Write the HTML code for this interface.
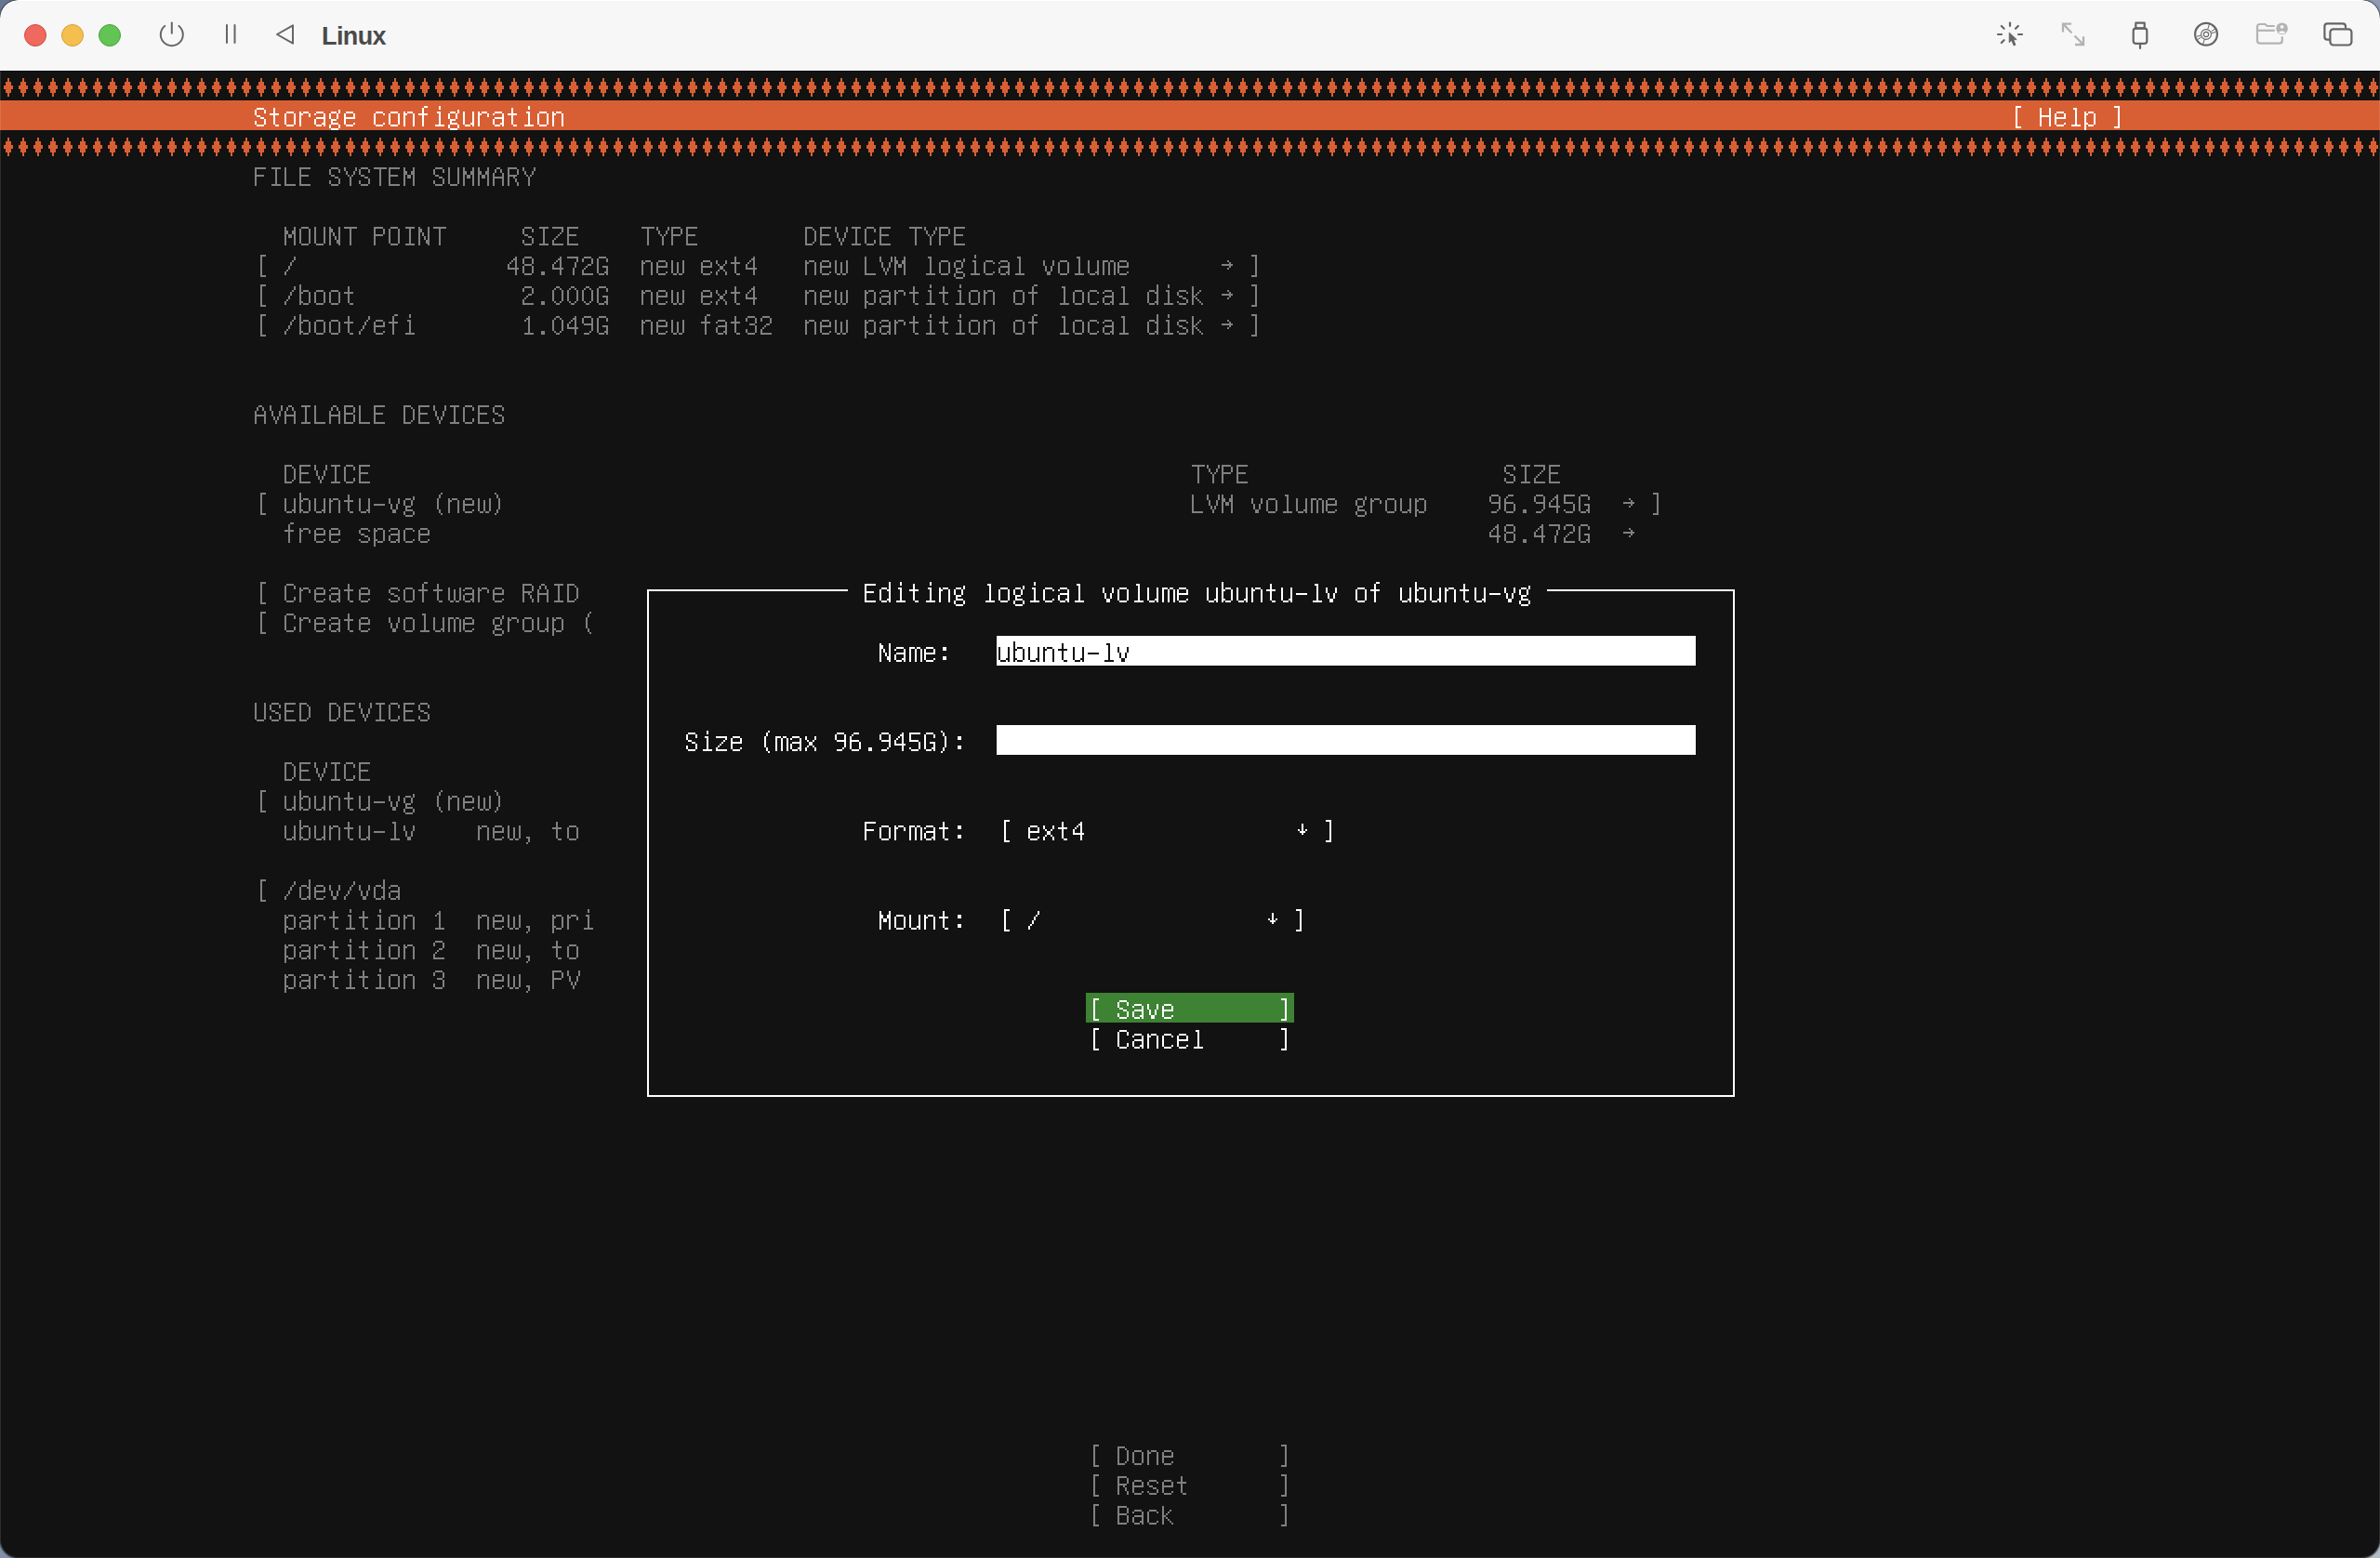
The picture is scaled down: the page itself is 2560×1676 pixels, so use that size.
<!DOCTYPE html>
<html><head><meta charset="utf-8"><title>Linux</title><style>
html,body{margin:0;padding:0;width:2560px;height:1676px;overflow:hidden;background:#7a8aa4;}
.cn{position:absolute;width:40px;height:40px;}
#win{position:absolute;left:0;top:0;width:2560px;height:1676px;border-radius:20px;overflow:hidden;background:#121212;box-shadow:0 0 1px 0.5px rgba(40,48,64,0.55);}
#tb{position:absolute;left:0;top:0;width:2560px;height:75px;background:#f7f7f7;border-radius:20px 20px 0 0;box-shadow:inset 0 1px 0 rgba(255,255,255,0.9);}
#hl{position:absolute;left:0;top:75px;width:2560px;height:1px;background:#ffffff;}
#bl{position:absolute;left:0;top:76px;width:2560px;height:1px;background:#000;}
#edge{position:absolute;left:0;top:76px;width:2558px;height:1599px;border:1px solid rgba(255,255,255,0.11);border-top:0;border-radius:0 0 20px 20px;pointer-events:none;}
</style></head><body>
<div class="cn" style="left:0;top:0;background:#687790"></div><div class="cn" style="right:0;top:0;background:#8e9bb0"></div><div class="cn" style="left:0;bottom:0;background:#7f90a8"></div><div class="cn" style="right:0;bottom:0;background:#b3bdc7"></div>
<div id="win">
<div id="tb"></div><div id="hl"></div><div id="bl"></div>
<svg style="position:absolute;left:0;top:0" width="2560" height="76">
<circle cx="38" cy="38" r="11.5" fill="#ee6a5f" stroke="#d4473d" stroke-width="1"/>
<circle cx="78" cy="38" r="11.5" fill="#f5bf4f" stroke="#d69e35" stroke-width="1"/>
<circle cx="118" cy="38" r="11.5" fill="#61c454" stroke="#46a53a" stroke-width="1"/>
<g fill="none" stroke="#656565" stroke-width="2" stroke-linecap="round" stroke-linejoin="round">
<path d="M177.2 27.9 A12 12 0 1 0 192.4 27.9"/>
<path d="M184.8 24.5 V35.8"/>
<path d="M244 27 V46"/><path d="M252.5 27 V46"/>
<path d="M298 37 L315 27.3 V46.7 Z"/>
</g>
<text x="346" y="47.5" font-family="Liberation Sans" font-weight="bold" font-size="27" letter-spacing="-0.6" fill="#4a4a4a">Linux</text>
<g fill="none" stroke="#656565" stroke-width="2.2" stroke-linecap="round">
<path d="M2162 24.5 V28"/><path d="M2152.8 28 L2155.6 30.8"/><path d="M2170.8 28 L2168 30.8"/>
<path d="M2149 37 H2153"/><path d="M2171 37 H2175"/><path d="M2152.8 46 L2155.6 43.2"/>
</g>
<path d="M2161.2 35 L2161.2 45.8 L2163.8 43.4 L2166 49 L2168 48.2 L2165.8 42.8 L2169.2 42.6 Z" fill="#656565" stroke="#656565" stroke-width="0.8" stroke-linejoin="round"/>
<g fill="none" stroke="#b3b3b3" stroke-width="2.3">
<path d="M2228 25.6 H2219 V34.4"/><path d="M2219 25.6 L2228.5 35.5"/>
<path d="M2232 48 H2241 V39.2"/><path d="M2241 48 L2231.5 38.5"/>
</g>
<g fill="none" stroke="#656565" stroke-width="2.2" stroke-linejoin="round">
<rect x="2297.3" y="24.7" width="9.4" height="6"/>
<rect x="2294.7" y="30.3" width="14.6" height="16.6" rx="3"/>
<path d="M2302 47 V52" stroke-linecap="round"/>
</g>
<g fill="none" stroke="#656565">
<circle cx="2373" cy="36.8" r="11.9" stroke-width="2.2"/>
<circle cx="2373" cy="37" r="5.4" stroke-width="1.1"/>
<circle cx="2373" cy="37" r="2.6" stroke-width="1.1"/>
<path d="M2376.4 26.2 L2374.7 31.5 M2382.8 30.8 L2378.4 34 M2383.4 34.4 L2378.6 35.8 M2363 39.3 L2367.4 38 M2363.4 42.8 L2367.6 40 M2369.7 47.6 L2371.2 42.4" stroke-width="1"/>
</g>
<g fill="none" stroke="#b3b3b3" stroke-width="2.2" stroke-linejoin="round">
<path d="M2446.8 28 H2438.6 L2436.4 26 H2431 Q2428 26 2428 29 V43.5 Q2428 46.7 2431 46.7 H2451.6 Q2454.8 46.7 2454.8 43.5 V39.2"/>
<path d="M2428.5 32.8 H2446.8"/>
</g>
<circle cx="2454.6" cy="30.8" r="6.3" fill="#b3b3b3"/>
<circle cx="2454.6" cy="28.8" r="1.9" fill="#f7f7f7"/>
<path d="M2450.6 34.8 Q2454.6 31.6 2458.6 34.8 Q2454.6 37.8 2450.6 34.8 Z" fill="#f7f7f7"/>
<g fill="none" stroke="#656565" stroke-width="2.2" stroke-linejoin="round">
<path d="M2523 30.5 V28.6 Q2523 25.4 2519.8 25.4 H2503.4 Q2500.4 25.4 2500.4 28.6 V39.4 Q2500.4 42.6 2503.4 42.6 H2506"/>
<rect x="2506.4" y="31.3" width="23" height="17.2" rx="3.4"/>
</g>
</svg>
<svg id="term" style="position:absolute;left:0;top:76px" width="2560" height="1600" shape-rendering="crispEdges"><defs><path id="g0" d="M10 6h2v2h-2zM8 8h2v4h-2zM6 12h2v12h-2zM8 24h2v4h-2zM10 28h2v2h-2z"/><path id="g1" d="M4 6h2v2h-2zM6 8h2v4h-2zM8 12h2v12h-2zM6 24h2v4h-2zM4 28h2v2h-2z"/><path id="g2" d="M6 24h4v2h-4zM8 26h2v4h-2zM6 30h2v2h-2z"/><path id="g3" d="M2 18h12v2h-12z"/><path id="g4" d="M6 24h4v4h-4z"/><path id="g5" d="M12 8h2v4h-2zM10 12h2v2h-2zM8 14h2v4h-2zM6 18h2v4h-2zM4 22h2v2h-2zM2 24h2v4h-2z"/><path id="g6" d="M6 8h4v2h-4zM4 10h2v2h-2zM10 10h2v2h-2zM2 12h2v12h-2zM12 12h2v12h-2zM4 24h2v2h-2zM10 24h2v2h-2zM6 26h4v2h-4z"/><path id="g7" d="M8 8h2v2h-2zM6 10h4v2h-4zM4 12h2v2h-2zM8 12h2v14h-2zM4 26h10v2h-10z"/><path id="g8" d="M4 8h8v2h-8zM2 10h2v4h-2zM12 10h2v6h-2zM8 16h4v2h-4zM6 18h2v2h-2zM4 20h2v2h-2zM2 22h2v4h-2zM2 26h12v2h-12z"/><path id="g9" d="M4 8h8v2h-8zM2 10h2v4h-2zM12 10h2v6h-2zM6 16h6v2h-6zM12 18h2v8h-2zM2 22h2v4h-2zM4 26h8v2h-8z"/><path id="g10" d="M10 8h2v2h-2zM8 10h4v2h-4zM6 12h2v2h-2zM10 12h2v8h-2zM4 14h2v2h-2zM2 16h2v4h-2zM2 20h12v2h-12zM10 22h2v6h-2z"/><path id="g11" d="M2 8h12v2h-12zM2 10h2v6h-2zM2 16h10v2h-10zM12 18h2v8h-2zM2 24h2v2h-2zM4 26h8v2h-8z"/><path id="g12" d="M6 8h6v2h-6zM4 10h2v2h-2zM2 12h2v4h-2zM2 16h10v2h-10zM2 18h2v8h-2zM12 18h2v8h-2zM4 26h8v2h-8z"/><path id="g13" d="M2 8h12v2h-12zM12 10h2v4h-2zM10 14h2v6h-2zM8 20h2v8h-2z"/><path id="g14" d="M4 8h8v2h-8zM2 10h2v6h-2zM12 10h2v6h-2zM4 16h8v2h-8zM2 18h2v8h-2zM12 18h2v8h-2zM4 26h8v2h-8z"/><path id="g15" d="M4 8h8v2h-8zM2 10h2v6h-2zM12 10h2v6h-2zM4 16h10v2h-10zM12 18h2v6h-2zM10 24h2v2h-2zM4 26h6v2h-6z"/><path id="g16" d="M6 12h4v4h-4zM6 22h4v4h-4z"/><path id="g17" d="M6 8h4v2h-4zM4 10h2v4h-2zM10 10h2v4h-2zM2 14h2v4h-2zM12 14h2v4h-2zM2 18h12v2h-12zM2 20h2v8h-2zM12 20h2v8h-2z"/><path id="g18" d="M2 8h10v2h-10zM2 10h2v6h-2zM12 10h2v6h-2zM2 16h10v2h-10zM2 18h2v8h-2zM12 18h2v8h-2zM2 26h10v2h-10z"/><path id="g19" d="M4 8h8v2h-8zM2 10h2v16h-2zM12 10h2v4h-2zM12 22h2v4h-2zM4 26h8v2h-8z"/><path id="g20" d="M2 8h8v2h-8zM2 10h2v16h-2zM10 10h2v2h-2zM12 12h2v12h-2zM10 24h2v2h-2zM2 26h8v2h-8z"/><path id="g21" d="M2 8h12v2h-12zM2 10h2v6h-2zM2 16h10v2h-10zM2 18h2v8h-2zM2 26h12v2h-12z"/><path id="g22" d="M2 8h12v2h-12zM2 10h2v6h-2zM2 16h10v2h-10zM2 18h2v10h-2z"/><path id="g23" d="M4 8h8v2h-8zM2 10h2v16h-2zM12 10h2v4h-2zM8 18h6v2h-6zM12 20h2v4h-2zM10 24h4v2h-4zM4 26h6v2h-6zM12 26h2v2h-2z"/><path id="g24" d="M2 8h2v8h-2zM12 8h2v8h-2zM2 16h12v2h-12zM2 18h2v10h-2zM12 18h2v10h-2z"/><path id="g25" d="M4 8h10v2h-10zM8 10h2v16h-2zM4 26h10v2h-10z"/><path id="g26" d="M2 8h2v18h-2zM2 26h12v2h-12z"/><path id="g27" d="M2 8h2v4h-2zM12 8h2v4h-2zM2 12h4v4h-4zM10 12h4v4h-4zM2 16h2v12h-2zM6 16h4v4h-4zM12 16h2v12h-2z"/><path id="g28" d="M2 8h2v2h-2zM12 8h2v14h-2zM2 10h4v4h-4zM2 14h2v14h-2zM6 14h2v4h-2zM8 18h2v4h-2zM10 22h4v4h-4zM12 26h2v2h-2z"/><path id="g29" d="M4 8h8v2h-8zM2 10h2v16h-2zM12 10h2v16h-2zM4 26h8v2h-8z"/><path id="g30" d="M2 8h10v2h-10zM2 10h2v6h-2zM12 10h2v6h-2zM2 16h10v2h-10zM2 18h2v10h-2z"/><path id="g31" d="M2 8h10v2h-10zM2 10h2v6h-2zM12 10h2v6h-2zM2 16h10v2h-10zM2 18h2v10h-2zM8 18h2v2h-2zM10 20h2v4h-2zM12 24h2v4h-2z"/><path id="g32" d="M4 8h8v2h-8zM2 10h2v6h-2zM12 10h2v4h-2zM4 16h4v2h-4zM8 18h4v2h-4zM12 20h2v6h-2zM2 22h2v4h-2zM4 26h8v2h-8z"/><path id="g33" d="M2 8h14v2h-14zM8 10h2v18h-2z"/><path id="g34" d="M2 8h2v18h-2zM12 8h2v18h-2zM4 26h8v2h-8z"/><path id="g35" d="M2 8h2v6h-2zM14 8h2v6h-2zM4 14h2v6h-2zM12 14h2v6h-2zM6 20h2v4h-2zM10 20h2v4h-2zM8 24h2v4h-2z"/><path id="g36" d="M2 8h2v4h-2zM14 8h2v4h-2zM4 12h2v4h-2zM12 12h2v4h-2zM6 16h2v2h-2zM10 16h2v2h-2zM8 18h2v10h-2z"/><path id="g37" d="M2 8h12v2h-12zM12 10h2v4h-2zM10 14h2v2h-2zM8 16h2v2h-2zM6 18h2v2h-2zM4 20h2v2h-2zM2 22h2v4h-2zM2 26h12v2h-12z"/><path id="g38" d="M8 6h6v2h-6zM8 8h2v20h-2zM8 28h6v2h-6z"/><path id="g39" d="M2 6h6v2h-6zM6 8h2v20h-2zM2 28h6v2h-6z"/><path id="g40" d="M4 12h8v2h-8zM2 14h2v2h-2zM12 14h2v4h-2zM4 18h10v2h-10zM2 20h2v6h-2zM12 20h2v4h-2zM10 24h4v2h-4zM4 26h6v2h-6zM12 26h2v2h-2z"/><path id="g41" d="M2 6h2v8h-2zM6 12h6v2h-6zM2 14h4v2h-4zM12 14h2v12h-2zM2 16h2v8h-2zM2 24h4v2h-4zM2 26h2v2h-2zM6 26h6v2h-6z"/><path id="g42" d="M4 12h8v2h-8zM2 14h2v12h-2zM12 14h2v2h-2zM12 24h2v2h-2zM4 26h8v2h-8z"/><path id="g43" d="M12 6h2v8h-2zM4 12h6v2h-6zM2 14h2v12h-2zM10 14h4v2h-4zM12 16h2v8h-2zM10 24h4v2h-4zM4 26h6v2h-6zM12 26h2v2h-2z"/><path id="g44" d="M4 12h8v2h-8zM2 14h2v4h-2zM12 14h2v4h-2zM2 18h12v2h-12zM2 20h2v6h-2zM12 24h2v2h-2zM4 26h8v2h-8z"/><path id="g45" d="M8 6h4v2h-4zM6 8h2v6h-2zM2 14h10v2h-10zM6 16h2v12h-2z"/><path id="g46" d="M12 10h2v4h-2zM4 12h6v2h-6zM2 14h2v6h-2zM10 14h2v6h-2zM4 20h6v2h-6zM4 22h2v2h-2zM4 24h8v2h-8zM2 26h2v4h-2zM12 26h2v4h-2zM4 30h8v2h-8z"/><path id="g47" d="M8 6h2v4h-2zM6 12h4v2h-4zM8 14h2v12h-2zM4 26h10v2h-10z"/><path id="g48" d="M2 8h2v10h-2zM10 12h2v2h-2zM8 14h2v2h-2zM6 16h2v2h-2zM2 18h4v2h-4zM2 20h2v8h-2zM6 20h2v2h-2zM8 22h2v2h-2zM10 24h2v2h-2zM12 26h2v2h-2z"/><path id="g49" d="M6 8h4v2h-4zM8 10h2v16h-2zM4 26h10v2h-10z"/><path id="g50" d="M2 12h6v2h-6zM10 12h4v2h-4zM2 14h2v14h-2zM8 14h2v14h-2zM14 14h2v14h-2z"/><path id="g51" d="M2 12h2v2h-2zM6 12h6v2h-6zM2 14h4v2h-4zM12 14h2v14h-2zM2 16h2v12h-2z"/><path id="g52" d="M4 12h8v2h-8zM2 14h2v12h-2zM12 14h2v12h-2zM4 26h8v2h-8z"/><path id="g53" d="M2 12h2v2h-2zM6 12h6v2h-6zM2 14h4v2h-4zM12 14h2v12h-2zM2 16h2v8h-2zM2 24h4v2h-4zM2 26h2v6h-2zM6 26h6v2h-6z"/><path id="g54" d="M2 12h2v2h-2zM6 12h6v2h-6zM2 14h4v2h-4zM12 14h2v4h-2zM2 16h2v12h-2z"/><path id="g55" d="M4 12h8v2h-8zM2 14h2v4h-2zM12 14h2v2h-2zM4 18h4v2h-4zM8 20h4v2h-4zM12 22h2v4h-2zM2 24h2v2h-2zM4 26h8v2h-8z"/><path id="g56" d="M6 8h2v6h-2zM2 14h10v2h-10zM6 16h2v10h-2zM8 26h4v2h-4z"/><path id="g57" d="M2 12h2v14h-2zM12 12h2v12h-2zM10 24h4v2h-4zM4 26h6v2h-6zM12 26h2v2h-2z"/><path id="g58" d="M2 12h2v6h-2zM12 12h2v6h-2zM4 18h2v6h-2zM10 18h2v6h-2zM6 24h4v4h-4z"/><path id="g59" d="M2 12h2v14h-2zM14 12h2v14h-2zM8 14h2v12h-2zM4 26h4v2h-4zM10 26h4v2h-4z"/><path id="g60" d="M2 12h2v4h-2zM12 12h2v4h-2zM4 16h2v2h-2zM10 16h2v2h-2zM6 18h4v4h-4zM4 22h2v2h-2zM10 22h2v2h-2zM2 24h2v4h-2zM12 24h2v4h-2z"/><path id="g61" d="M2 12h12v2h-12zM12 14h2v2h-2zM10 16h2v2h-2zM8 18h2v2h-2zM6 20h2v2h-2zM4 22h2v2h-2zM2 24h2v2h-2zM2 26h12v2h-12z"/><path id="g62" d="M8 12h2v2h-2zM10 14h2v2h-2zM2 16h12v2h-12zM10 18h2v2h-2zM8 20h2v2h-2z"/><path id="g63" d="M8 10h2v8h-2zM4 16h2v2h-2zM12 16h2v2h-2zM6 18h6v2h-6zM8 20h2v2h-2z"/><path id="g64" d="M0 14h16v2h-16z"/><path id="g65" d="M8 0h2v32h-2z"/><path id="g66" d="M8 14h8v2h-8zM8 16h2v16h-2z"/><path id="g67" d="M0 14h10v2h-10zM8 16h2v16h-2z"/><path id="g68" d="M8 0h2v14h-2zM8 14h8v2h-8z"/><path id="g69" d="M8 0h2v14h-2zM0 14h10v2h-10z"/><path id="g70" d="M8 8h2v4h-2zM6 12h6v4h-6zM4 16h10v4h-10zM6 20h6v4h-6zM8 24h2v4h-2z"/></defs><rect x="0" y="32" width="2560" height="32" fill="#d85f34"/><rect x="1072" y="608" width="752" height="32" fill="#ffffff"/><rect x="1072" y="704" width="752" height="32" fill="#ffffff"/><rect x="1168" y="992" width="224" height="32" fill="#3e8233"/><g fill="#d85f34"><use href="#g70" xlink:href="#g70" x="0" y="0"/><use href="#g70" xlink:href="#g70" x="16" y="0"/><use href="#g70" xlink:href="#g70" x="32" y="0"/><use href="#g70" xlink:href="#g70" x="48" y="0"/><use href="#g70" xlink:href="#g70" x="64" y="0"/><use href="#g70" xlink:href="#g70" x="80" y="0"/><use href="#g70" xlink:href="#g70" x="96" y="0"/><use href="#g70" xlink:href="#g70" x="112" y="0"/><use href="#g70" xlink:href="#g70" x="128" y="0"/><use href="#g70" xlink:href="#g70" x="144" y="0"/><use href="#g70" xlink:href="#g70" x="160" y="0"/><use href="#g70" xlink:href="#g70" x="176" y="0"/><use href="#g70" xlink:href="#g70" x="192" y="0"/><use href="#g70" xlink:href="#g70" x="208" y="0"/><use href="#g70" xlink:href="#g70" x="224" y="0"/><use href="#g70" xlink:href="#g70" x="240" y="0"/><use href="#g70" xlink:href="#g70" x="256" y="0"/><use href="#g70" xlink:href="#g70" x="272" y="0"/><use href="#g70" xlink:href="#g70" x="288" y="0"/><use href="#g70" xlink:href="#g70" x="304" y="0"/><use href="#g70" xlink:href="#g70" x="320" y="0"/><use href="#g70" xlink:href="#g70" x="336" y="0"/><use href="#g70" xlink:href="#g70" x="352" y="0"/><use href="#g70" xlink:href="#g70" x="368" y="0"/><use href="#g70" xlink:href="#g70" x="384" y="0"/><use href="#g70" xlink:href="#g70" x="400" y="0"/><use href="#g70" xlink:href="#g70" x="416" y="0"/><use href="#g70" xlink:href="#g70" x="432" y="0"/><use href="#g70" xlink:href="#g70" x="448" y="0"/><use href="#g70" xlink:href="#g70" x="464" y="0"/><use href="#g70" xlink:href="#g70" x="480" y="0"/><use href="#g70" xlink:href="#g70" x="496" y="0"/><use href="#g70" xlink:href="#g70" x="512" y="0"/><use href="#g70" xlink:href="#g70" x="528" y="0"/><use href="#g70" xlink:href="#g70" x="544" y="0"/><use href="#g70" xlink:href="#g70" x="560" y="0"/><use href="#g70" xlink:href="#g70" x="576" y="0"/><use href="#g70" xlink:href="#g70" x="592" y="0"/><use href="#g70" xlink:href="#g70" x="608" y="0"/><use href="#g70" xlink:href="#g70" x="624" y="0"/><use href="#g70" xlink:href="#g70" x="640" y="0"/><use href="#g70" xlink:href="#g70" x="656" y="0"/><use href="#g70" xlink:href="#g70" x="672" y="0"/><use href="#g70" xlink:href="#g70" x="688" y="0"/><use href="#g70" xlink:href="#g70" x="704" y="0"/><use href="#g70" xlink:href="#g70" x="720" y="0"/><use href="#g70" xlink:href="#g70" x="736" y="0"/><use href="#g70" xlink:href="#g70" x="752" y="0"/><use href="#g70" xlink:href="#g70" x="768" y="0"/><use href="#g70" xlink:href="#g70" x="784" y="0"/><use href="#g70" xlink:href="#g70" x="800" y="0"/><use href="#g70" xlink:href="#g70" x="816" y="0"/><use href="#g70" xlink:href="#g70" x="832" y="0"/><use href="#g70" xlink:href="#g70" x="848" y="0"/><use href="#g70" xlink:href="#g70" x="864" y="0"/><use href="#g70" xlink:href="#g70" x="880" y="0"/><use href="#g70" xlink:href="#g70" x="896" y="0"/><use href="#g70" xlink:href="#g70" x="912" y="0"/><use href="#g70" xlink:href="#g70" x="928" y="0"/><use href="#g70" xlink:href="#g70" x="944" y="0"/><use href="#g70" xlink:href="#g70" x="960" y="0"/><use href="#g70" xlink:href="#g70" x="976" y="0"/><use href="#g70" xlink:href="#g70" x="992" y="0"/><use href="#g70" xlink:href="#g70" x="1008" y="0"/><use href="#g70" xlink:href="#g70" x="1024" y="0"/><use href="#g70" xlink:href="#g70" x="1040" y="0"/><use href="#g70" xlink:href="#g70" x="1056" y="0"/><use href="#g70" xlink:href="#g70" x="1072" y="0"/><use href="#g70" xlink:href="#g70" x="1088" y="0"/><use href="#g70" xlink:href="#g70" x="1104" y="0"/><use href="#g70" xlink:href="#g70" x="1120" y="0"/><use href="#g70" xlink:href="#g70" x="1136" y="0"/><use href="#g70" xlink:href="#g70" x="1152" y="0"/><use href="#g70" xlink:href="#g70" x="1168" y="0"/><use href="#g70" xlink:href="#g70" x="1184" y="0"/><use href="#g70" xlink:href="#g70" x="1200" y="0"/><use href="#g70" xlink:href="#g70" x="1216" y="0"/><use href="#g70" xlink:href="#g70" x="1232" y="0"/><use href="#g70" xlink:href="#g70" x="1248" y="0"/><use href="#g70" xlink:href="#g70" x="1264" y="0"/><use href="#g70" xlink:href="#g70" x="1280" y="0"/><use href="#g70" xlink:href="#g70" x="1296" y="0"/><use href="#g70" xlink:href="#g70" x="1312" y="0"/><use href="#g70" xlink:href="#g70" x="1328" y="0"/><use href="#g70" xlink:href="#g70" x="1344" y="0"/><use href="#g70" xlink:href="#g70" x="1360" y="0"/><use href="#g70" xlink:href="#g70" x="1376" y="0"/><use href="#g70" xlink:href="#g70" x="1392" y="0"/><use href="#g70" xlink:href="#g70" x="1408" y="0"/><use href="#g70" xlink:href="#g70" x="1424" y="0"/><use href="#g70" xlink:href="#g70" x="1440" y="0"/><use href="#g70" xlink:href="#g70" x="1456" y="0"/><use href="#g70" xlink:href="#g70" x="1472" y="0"/><use href="#g70" xlink:href="#g70" x="1488" y="0"/><use href="#g70" xlink:href="#g70" x="1504" y="0"/><use href="#g70" xlink:href="#g70" x="1520" y="0"/><use href="#g70" xlink:href="#g70" x="1536" y="0"/><use href="#g70" xlink:href="#g70" x="1552" y="0"/><use href="#g70" xlink:href="#g70" x="1568" y="0"/><use href="#g70" xlink:href="#g70" x="1584" y="0"/><use href="#g70" xlink:href="#g70" x="1600" y="0"/><use href="#g70" xlink:href="#g70" x="1616" y="0"/><use href="#g70" xlink:href="#g70" x="1632" y="0"/><use href="#g70" xlink:href="#g70" x="1648" y="0"/><use href="#g70" xlink:href="#g70" x="1664" y="0"/><use href="#g70" xlink:href="#g70" x="1680" y="0"/><use href="#g70" xlink:href="#g70" x="1696" y="0"/><use href="#g70" xlink:href="#g70" x="1712" y="0"/><use href="#g70" xlink:href="#g70" x="1728" y="0"/><use href="#g70" xlink:href="#g70" x="1744" y="0"/><use href="#g70" xlink:href="#g70" x="1760" y="0"/><use href="#g70" xlink:href="#g70" x="1776" y="0"/><use href="#g70" xlink:href="#g70" x="1792" y="0"/><use href="#g70" xlink:href="#g70" x="1808" y="0"/><use href="#g70" xlink:href="#g70" x="1824" y="0"/><use href="#g70" xlink:href="#g70" x="1840" y="0"/><use href="#g70" xlink:href="#g70" x="1856" y="0"/><use href="#g70" xlink:href="#g70" x="1872" y="0"/><use href="#g70" xlink:href="#g70" x="1888" y="0"/><use href="#g70" xlink:href="#g70" x="1904" y="0"/><use href="#g70" xlink:href="#g70" x="1920" y="0"/><use href="#g70" xlink:href="#g70" x="1936" y="0"/><use href="#g70" xlink:href="#g70" x="1952" y="0"/><use href="#g70" xlink:href="#g70" x="1968" y="0"/><use href="#g70" xlink:href="#g70" x="1984" y="0"/><use href="#g70" xlink:href="#g70" x="2000" y="0"/><use href="#g70" xlink:href="#g70" x="2016" y="0"/><use href="#g70" xlink:href="#g70" x="2032" y="0"/><use href="#g70" xlink:href="#g70" x="2048" y="0"/><use href="#g70" xlink:href="#g70" x="2064" y="0"/><use href="#g70" xlink:href="#g70" x="2080" y="0"/><use href="#g70" xlink:href="#g70" x="2096" y="0"/><use href="#g70" xlink:href="#g70" x="2112" y="0"/><use href="#g70" xlink:href="#g70" x="2128" y="0"/><use href="#g70" xlink:href="#g70" x="2144" y="0"/><use href="#g70" xlink:href="#g70" x="2160" y="0"/><use href="#g70" xlink:href="#g70" x="2176" y="0"/><use href="#g70" xlink:href="#g70" x="2192" y="0"/><use href="#g70" xlink:href="#g70" x="2208" y="0"/><use href="#g70" xlink:href="#g70" x="2224" y="0"/><use href="#g70" xlink:href="#g70" x="2240" y="0"/><use href="#g70" xlink:href="#g70" x="2256" y="0"/><use href="#g70" xlink:href="#g70" x="2272" y="0"/><use href="#g70" xlink:href="#g70" x="2288" y="0"/><use href="#g70" xlink:href="#g70" x="2304" y="0"/><use href="#g70" xlink:href="#g70" x="2320" y="0"/><use href="#g70" xlink:href="#g70" x="2336" y="0"/><use href="#g70" xlink:href="#g70" x="2352" y="0"/><use href="#g70" xlink:href="#g70" x="2368" y="0"/><use href="#g70" xlink:href="#g70" x="2384" y="0"/><use href="#g70" xlink:href="#g70" x="2400" y="0"/><use href="#g70" xlink:href="#g70" x="2416" y="0"/><use href="#g70" xlink:href="#g70" x="2432" y="0"/><use href="#g70" xlink:href="#g70" x="2448" y="0"/><use href="#g70" xlink:href="#g70" x="2464" y="0"/><use href="#g70" xlink:href="#g70" x="2480" y="0"/><use href="#g70" xlink:href="#g70" x="2496" y="0"/><use href="#g70" xlink:href="#g70" x="2512" y="0"/><use href="#g70" xlink:href="#g70" x="2528" y="0"/><use href="#g70" xlink:href="#g70" x="2544" y="0"/><use href="#g70" xlink:href="#g70" x="0" y="64"/><use href="#g70" xlink:href="#g70" x="16" y="64"/><use href="#g70" xlink:href="#g70" x="32" y="64"/><use href="#g70" xlink:href="#g70" x="48" y="64"/><use href="#g70" xlink:href="#g70" x="64" y="64"/><use href="#g70" xlink:href="#g70" x="80" y="64"/><use href="#g70" xlink:href="#g70" x="96" y="64"/><use href="#g70" xlink:href="#g70" x="112" y="64"/><use href="#g70" xlink:href="#g70" x="128" y="64"/><use href="#g70" xlink:href="#g70" x="144" y="64"/><use href="#g70" xlink:href="#g70" x="160" y="64"/><use href="#g70" xlink:href="#g70" x="176" y="64"/><use href="#g70" xlink:href="#g70" x="192" y="64"/><use href="#g70" xlink:href="#g70" x="208" y="64"/><use href="#g70" xlink:href="#g70" x="224" y="64"/><use href="#g70" xlink:href="#g70" x="240" y="64"/><use href="#g70" xlink:href="#g70" x="256" y="64"/><use href="#g70" xlink:href="#g70" x="272" y="64"/><use href="#g70" xlink:href="#g70" x="288" y="64"/><use href="#g70" xlink:href="#g70" x="304" y="64"/><use href="#g70" xlink:href="#g70" x="320" y="64"/><use href="#g70" xlink:href="#g70" x="336" y="64"/><use href="#g70" xlink:href="#g70" x="352" y="64"/><use href="#g70" xlink:href="#g70" x="368" y="64"/><use href="#g70" xlink:href="#g70" x="384" y="64"/><use href="#g70" xlink:href="#g70" x="400" y="64"/><use href="#g70" xlink:href="#g70" x="416" y="64"/><use href="#g70" xlink:href="#g70" x="432" y="64"/><use href="#g70" xlink:href="#g70" x="448" y="64"/><use href="#g70" xlink:href="#g70" x="464" y="64"/><use href="#g70" xlink:href="#g70" x="480" y="64"/><use href="#g70" xlink:href="#g70" x="496" y="64"/><use href="#g70" xlink:href="#g70" x="512" y="64"/><use href="#g70" xlink:href="#g70" x="528" y="64"/><use href="#g70" xlink:href="#g70" x="544" y="64"/><use href="#g70" xlink:href="#g70" x="560" y="64"/><use href="#g70" xlink:href="#g70" x="576" y="64"/><use href="#g70" xlink:href="#g70" x="592" y="64"/><use href="#g70" xlink:href="#g70" x="608" y="64"/><use href="#g70" xlink:href="#g70" x="624" y="64"/><use href="#g70" xlink:href="#g70" x="640" y="64"/><use href="#g70" xlink:href="#g70" x="656" y="64"/><use href="#g70" xlink:href="#g70" x="672" y="64"/><use href="#g70" xlink:href="#g70" x="688" y="64"/><use href="#g70" xlink:href="#g70" x="704" y="64"/><use href="#g70" xlink:href="#g70" x="720" y="64"/><use href="#g70" xlink:href="#g70" x="736" y="64"/><use href="#g70" xlink:href="#g70" x="752" y="64"/><use href="#g70" xlink:href="#g70" x="768" y="64"/><use href="#g70" xlink:href="#g70" x="784" y="64"/><use href="#g70" xlink:href="#g70" x="800" y="64"/><use href="#g70" xlink:href="#g70" x="816" y="64"/><use href="#g70" xlink:href="#g70" x="832" y="64"/><use href="#g70" xlink:href="#g70" x="848" y="64"/><use href="#g70" xlink:href="#g70" x="864" y="64"/><use href="#g70" xlink:href="#g70" x="880" y="64"/><use href="#g70" xlink:href="#g70" x="896" y="64"/><use href="#g70" xlink:href="#g70" x="912" y="64"/><use href="#g70" xlink:href="#g70" x="928" y="64"/><use href="#g70" xlink:href="#g70" x="944" y="64"/><use href="#g70" xlink:href="#g70" x="960" y="64"/><use href="#g70" xlink:href="#g70" x="976" y="64"/><use href="#g70" xlink:href="#g70" x="992" y="64"/><use href="#g70" xlink:href="#g70" x="1008" y="64"/><use href="#g70" xlink:href="#g70" x="1024" y="64"/><use href="#g70" xlink:href="#g70" x="1040" y="64"/><use href="#g70" xlink:href="#g70" x="1056" y="64"/><use href="#g70" xlink:href="#g70" x="1072" y="64"/><use href="#g70" xlink:href="#g70" x="1088" y="64"/><use href="#g70" xlink:href="#g70" x="1104" y="64"/><use href="#g70" xlink:href="#g70" x="1120" y="64"/><use href="#g70" xlink:href="#g70" x="1136" y="64"/><use href="#g70" xlink:href="#g70" x="1152" y="64"/><use href="#g70" xlink:href="#g70" x="1168" y="64"/><use href="#g70" xlink:href="#g70" x="1184" y="64"/><use href="#g70" xlink:href="#g70" x="1200" y="64"/><use href="#g70" xlink:href="#g70" x="1216" y="64"/><use href="#g70" xlink:href="#g70" x="1232" y="64"/><use href="#g70" xlink:href="#g70" x="1248" y="64"/><use href="#g70" xlink:href="#g70" x="1264" y="64"/><use href="#g70" xlink:href="#g70" x="1280" y="64"/><use href="#g70" xlink:href="#g70" x="1296" y="64"/><use href="#g70" xlink:href="#g70" x="1312" y="64"/><use href="#g70" xlink:href="#g70" x="1328" y="64"/><use href="#g70" xlink:href="#g70" x="1344" y="64"/><use href="#g70" xlink:href="#g70" x="1360" y="64"/><use href="#g70" xlink:href="#g70" x="1376" y="64"/><use href="#g70" xlink:href="#g70" x="1392" y="64"/><use href="#g70" xlink:href="#g70" x="1408" y="64"/><use href="#g70" xlink:href="#g70" x="1424" y="64"/><use href="#g70" xlink:href="#g70" x="1440" y="64"/><use href="#g70" xlink:href="#g70" x="1456" y="64"/><use href="#g70" xlink:href="#g70" x="1472" y="64"/><use href="#g70" xlink:href="#g70" x="1488" y="64"/><use href="#g70" xlink:href="#g70" x="1504" y="64"/><use href="#g70" xlink:href="#g70" x="1520" y="64"/><use href="#g70" xlink:href="#g70" x="1536" y="64"/><use href="#g70" xlink:href="#g70" x="1552" y="64"/><use href="#g70" xlink:href="#g70" x="1568" y="64"/><use href="#g70" xlink:href="#g70" x="1584" y="64"/><use href="#g70" xlink:href="#g70" x="1600" y="64"/><use href="#g70" xlink:href="#g70" x="1616" y="64"/><use href="#g70" xlink:href="#g70" x="1632" y="64"/><use href="#g70" xlink:href="#g70" x="1648" y="64"/><use href="#g70" xlink:href="#g70" x="1664" y="64"/><use href="#g70" xlink:href="#g70" x="1680" y="64"/><use href="#g70" xlink:href="#g70" x="1696" y="64"/><use href="#g70" xlink:href="#g70" x="1712" y="64"/><use href="#g70" xlink:href="#g70" x="1728" y="64"/><use href="#g70" xlink:href="#g70" x="1744" y="64"/><use href="#g70" xlink:href="#g70" x="1760" y="64"/><use href="#g70" xlink:href="#g70" x="1776" y="64"/><use href="#g70" xlink:href="#g70" x="1792" y="64"/><use href="#g70" xlink:href="#g70" x="1808" y="64"/><use href="#g70" xlink:href="#g70" x="1824" y="64"/><use href="#g70" xlink:href="#g70" x="1840" y="64"/><use href="#g70" xlink:href="#g70" x="1856" y="64"/><use href="#g70" xlink:href="#g70" x="1872" y="64"/><use href="#g70" xlink:href="#g70" x="1888" y="64"/><use href="#g70" xlink:href="#g70" x="1904" y="64"/><use href="#g70" xlink:href="#g70" x="1920" y="64"/><use href="#g70" xlink:href="#g70" x="1936" y="64"/><use href="#g70" xlink:href="#g70" x="1952" y="64"/><use href="#g70" xlink:href="#g70" x="1968" y="64"/><use href="#g70" xlink:href="#g70" x="1984" y="64"/><use href="#g70" xlink:href="#g70" x="2000" y="64"/><use href="#g70" xlink:href="#g70" x="2016" y="64"/><use href="#g70" xlink:href="#g70" x="2032" y="64"/><use href="#g70" xlink:href="#g70" x="2048" y="64"/><use href="#g70" xlink:href="#g70" x="2064" y="64"/><use href="#g70" xlink:href="#g70" x="2080" y="64"/><use href="#g70" xlink:href="#g70" x="2096" y="64"/><use href="#g70" xlink:href="#g70" x="2112" y="64"/><use href="#g70" xlink:href="#g70" x="2128" y="64"/><use href="#g70" xlink:href="#g70" x="2144" y="64"/><use href="#g70" xlink:href="#g70" x="2160" y="64"/><use href="#g70" xlink:href="#g70" x="2176" y="64"/><use href="#g70" xlink:href="#g70" x="2192" y="64"/><use href="#g70" xlink:href="#g70" x="2208" y="64"/><use href="#g70" xlink:href="#g70" x="2224" y="64"/><use href="#g70" xlink:href="#g70" x="2240" y="64"/><use href="#g70" xlink:href="#g70" x="2256" y="64"/><use href="#g70" xlink:href="#g70" x="2272" y="64"/><use href="#g70" xlink:href="#g70" x="2288" y="64"/><use href="#g70" xlink:href="#g70" x="2304" y="64"/><use href="#g70" xlink:href="#g70" x="2320" y="64"/><use href="#g70" xlink:href="#g70" x="2336" y="64"/><use href="#g70" xlink:href="#g70" x="2352" y="64"/><use href="#g70" xlink:href="#g70" x="2368" y="64"/><use href="#g70" xlink:href="#g70" x="2384" y="64"/><use href="#g70" xlink:href="#g70" x="2400" y="64"/><use href="#g70" xlink:href="#g70" x="2416" y="64"/><use href="#g70" xlink:href="#g70" x="2432" y="64"/><use href="#g70" xlink:href="#g70" x="2448" y="64"/><use href="#g70" xlink:href="#g70" x="2464" y="64"/><use href="#g70" xlink:href="#g70" x="2480" y="64"/><use href="#g70" xlink:href="#g70" x="2496" y="64"/><use href="#g70" xlink:href="#g70" x="2512" y="64"/><use href="#g70" xlink:href="#g70" x="2528" y="64"/><use href="#g70" xlink:href="#g70" x="2544" y="64"/></g><g fill="#ffffff"><use href="#g32" xlink:href="#g32" x="272" y="32"/><use href="#g56" xlink:href="#g56" x="288" y="32"/><use href="#g52" xlink:href="#g52" x="304" y="32"/><use href="#g54" xlink:href="#g54" x="320" y="32"/><use href="#g40" xlink:href="#g40" x="336" y="32"/><use href="#g46" xlink:href="#g46" x="352" y="32"/><use href="#g44" xlink:href="#g44" x="368" y="32"/><use href="#g42" xlink:href="#g42" x="400" y="32"/><use href="#g52" xlink:href="#g52" x="416" y="32"/><use href="#g51" xlink:href="#g51" x="432" y="32"/><use href="#g45" xlink:href="#g45" x="448" y="32"/><use href="#g47" xlink:href="#g47" x="464" y="32"/><use href="#g46" xlink:href="#g46" x="480" y="32"/><use href="#g57" xlink:href="#g57" x="496" y="32"/><use href="#g54" xlink:href="#g54" x="512" y="32"/><use href="#g40" xlink:href="#g40" x="528" y="32"/><use href="#g56" xlink:href="#g56" x="544" y="32"/><use href="#g47" xlink:href="#g47" x="560" y="32"/><use href="#g52" xlink:href="#g52" x="576" y="32"/><use href="#g51" xlink:href="#g51" x="592" y="32"/><use href="#g38" xlink:href="#g38" x="2160" y="32"/><use href="#g24" xlink:href="#g24" x="2192" y="32"/><use href="#g44" xlink:href="#g44" x="2208" y="32"/><use href="#g49" xlink:href="#g49" x="2224" y="32"/><use href="#g53" xlink:href="#g53" x="2240" y="32"/><use href="#g39" xlink:href="#g39" x="2272" y="32"/><use href="#g66" xlink:href="#g66" x="688" y="544"/><use href="#g64" xlink:href="#g64" x="704" y="544"/><use href="#g64" xlink:href="#g64" x="720" y="544"/><use href="#g64" xlink:href="#g64" x="736" y="544"/><use href="#g64" xlink:href="#g64" x="752" y="544"/><use href="#g64" xlink:href="#g64" x="768" y="544"/><use href="#g64" xlink:href="#g64" x="784" y="544"/><use href="#g64" xlink:href="#g64" x="800" y="544"/><use href="#g64" xlink:href="#g64" x="816" y="544"/><use href="#g64" xlink:href="#g64" x="832" y="544"/><use href="#g64" xlink:href="#g64" x="848" y="544"/><use href="#g64" xlink:href="#g64" x="864" y="544"/><use href="#g64" xlink:href="#g64" x="880" y="544"/><use href="#g64" xlink:href="#g64" x="896" y="544"/><use href="#g21" xlink:href="#g21" x="928" y="544"/><use href="#g43" xlink:href="#g43" x="944" y="544"/><use href="#g47" xlink:href="#g47" x="960" y="544"/><use href="#g56" xlink:href="#g56" x="976" y="544"/><use href="#g47" xlink:href="#g47" x="992" y="544"/><use href="#g51" xlink:href="#g51" x="1008" y="544"/><use href="#g46" xlink:href="#g46" x="1024" y="544"/><use href="#g49" xlink:href="#g49" x="1056" y="544"/><use href="#g52" xlink:href="#g52" x="1072" y="544"/><use href="#g46" xlink:href="#g46" x="1088" y="544"/><use href="#g47" xlink:href="#g47" x="1104" y="544"/><use href="#g42" xlink:href="#g42" x="1120" y="544"/><use href="#g40" xlink:href="#g40" x="1136" y="544"/><use href="#g49" xlink:href="#g49" x="1152" y="544"/><use href="#g58" xlink:href="#g58" x="1184" y="544"/><use href="#g52" xlink:href="#g52" x="1200" y="544"/><use href="#g49" xlink:href="#g49" x="1216" y="544"/><use href="#g57" xlink:href="#g57" x="1232" y="544"/><use href="#g50" xlink:href="#g50" x="1248" y="544"/><use href="#g44" xlink:href="#g44" x="1264" y="544"/><use href="#g57" xlink:href="#g57" x="1296" y="544"/><use href="#g41" xlink:href="#g41" x="1312" y="544"/><use href="#g57" xlink:href="#g57" x="1328" y="544"/><use href="#g51" xlink:href="#g51" x="1344" y="544"/><use href="#g56" xlink:href="#g56" x="1360" y="544"/><use href="#g57" xlink:href="#g57" x="1376" y="544"/><use href="#g3" xlink:href="#g3" x="1392" y="544"/><use href="#g49" xlink:href="#g49" x="1408" y="544"/><use href="#g58" xlink:href="#g58" x="1424" y="544"/><use href="#g52" xlink:href="#g52" x="1456" y="544"/><use href="#g45" xlink:href="#g45" x="1472" y="544"/><use href="#g57" xlink:href="#g57" x="1504" y="544"/><use href="#g41" xlink:href="#g41" x="1520" y="544"/><use href="#g57" xlink:href="#g57" x="1536" y="544"/><use href="#g51" xlink:href="#g51" x="1552" y="544"/><use href="#g56" xlink:href="#g56" x="1568" y="544"/><use href="#g57" xlink:href="#g57" x="1584" y="544"/><use href="#g3" xlink:href="#g3" x="1600" y="544"/><use href="#g58" xlink:href="#g58" x="1616" y="544"/><use href="#g46" xlink:href="#g46" x="1632" y="544"/><use href="#g64" xlink:href="#g64" x="1664" y="544"/><use href="#g64" xlink:href="#g64" x="1680" y="544"/><use href="#g64" xlink:href="#g64" x="1696" y="544"/><use href="#g64" xlink:href="#g64" x="1712" y="544"/><use href="#g64" xlink:href="#g64" x="1728" y="544"/><use href="#g64" xlink:href="#g64" x="1744" y="544"/><use href="#g64" xlink:href="#g64" x="1760" y="544"/><use href="#g64" xlink:href="#g64" x="1776" y="544"/><use href="#g64" xlink:href="#g64" x="1792" y="544"/><use href="#g64" xlink:href="#g64" x="1808" y="544"/><use href="#g64" xlink:href="#g64" x="1824" y="544"/><use href="#g64" xlink:href="#g64" x="1840" y="544"/><use href="#g67" xlink:href="#g67" x="1856" y="544"/><use href="#g65" xlink:href="#g65" x="688" y="576"/><use href="#g65" xlink:href="#g65" x="1856" y="576"/><use href="#g65" xlink:href="#g65" x="688" y="608"/><use href="#g28" xlink:href="#g28" x="944" y="608"/><use href="#g40" xlink:href="#g40" x="960" y="608"/><use href="#g50" xlink:href="#g50" x="976" y="608"/><use href="#g44" xlink:href="#g44" x="992" y="608"/><use href="#g16" xlink:href="#g16" x="1008" y="608"/><use href="#g65" xlink:href="#g65" x="1856" y="608"/><use href="#g65" xlink:href="#g65" x="688" y="640"/><use href="#g65" xlink:href="#g65" x="1856" y="640"/><use href="#g65" xlink:href="#g65" x="688" y="672"/><use href="#g65" xlink:href="#g65" x="1856" y="672"/><use href="#g65" xlink:href="#g65" x="688" y="704"/><use href="#g32" xlink:href="#g32" x="736" y="704"/><use href="#g47" xlink:href="#g47" x="752" y="704"/><use href="#g61" xlink:href="#g61" x="768" y="704"/><use href="#g44" xlink:href="#g44" x="784" y="704"/><use href="#g0" xlink:href="#g0" x="816" y="704"/><use href="#g50" xlink:href="#g50" x="832" y="704"/><use href="#g40" xlink:href="#g40" x="848" y="704"/><use href="#g60" xlink:href="#g60" x="864" y="704"/><use href="#g15" xlink:href="#g15" x="896" y="704"/><use href="#g12" xlink:href="#g12" x="912" y="704"/><use href="#g4" xlink:href="#g4" x="928" y="704"/><use href="#g15" xlink:href="#g15" x="944" y="704"/><use href="#g10" xlink:href="#g10" x="960" y="704"/><use href="#g11" xlink:href="#g11" x="976" y="704"/><use href="#g23" xlink:href="#g23" x="992" y="704"/><use href="#g1" xlink:href="#g1" x="1008" y="704"/><use href="#g16" xlink:href="#g16" x="1024" y="704"/><use href="#g65" xlink:href="#g65" x="1856" y="704"/><use href="#g65" xlink:href="#g65" x="688" y="736"/><use href="#g65" xlink:href="#g65" x="1856" y="736"/><use href="#g65" xlink:href="#g65" x="688" y="768"/><use href="#g65" xlink:href="#g65" x="1856" y="768"/><use href="#g65" xlink:href="#g65" x="688" y="800"/><use href="#g22" xlink:href="#g22" x="928" y="800"/><use href="#g52" xlink:href="#g52" x="944" y="800"/><use href="#g54" xlink:href="#g54" x="960" y="800"/><use href="#g50" xlink:href="#g50" x="976" y="800"/><use href="#g40" xlink:href="#g40" x="992" y="800"/><use href="#g56" xlink:href="#g56" x="1008" y="800"/><use href="#g16" xlink:href="#g16" x="1024" y="800"/><use href="#g38" xlink:href="#g38" x="1072" y="800"/><use href="#g44" xlink:href="#g44" x="1104" y="800"/><use href="#g60" xlink:href="#g60" x="1120" y="800"/><use href="#g56" xlink:href="#g56" x="1136" y="800"/><use href="#g10" xlink:href="#g10" x="1152" y="800"/><use href="#g63" xlink:href="#g63" x="1392" y="800"/><use href="#g39" xlink:href="#g39" x="1424" y="800"/><use href="#g65" xlink:href="#g65" x="1856" y="800"/><use href="#g65" xlink:href="#g65" x="688" y="832"/><use href="#g65" xlink:href="#g65" x="1856" y="832"/><use href="#g65" xlink:href="#g65" x="688" y="864"/><use href="#g65" xlink:href="#g65" x="1856" y="864"/><use href="#g65" xlink:href="#g65" x="688" y="896"/><use href="#g27" xlink:href="#g27" x="944" y="896"/><use href="#g52" xlink:href="#g52" x="960" y="896"/><use href="#g57" xlink:href="#g57" x="976" y="896"/><use href="#g51" xlink:href="#g51" x="992" y="896"/><use href="#g56" xlink:href="#g56" x="1008" y="896"/><use href="#g16" xlink:href="#g16" x="1024" y="896"/><use href="#g38" xlink:href="#g38" x="1072" y="896"/><use href="#g5" xlink:href="#g5" x="1104" y="896"/><use href="#g63" xlink:href="#g63" x="1360" y="896"/><use href="#g39" xlink:href="#g39" x="1392" y="896"/><use href="#g65" xlink:href="#g65" x="1856" y="896"/><use href="#g65" xlink:href="#g65" x="688" y="928"/><use href="#g65" xlink:href="#g65" x="1856" y="928"/><use href="#g65" xlink:href="#g65" x="688" y="960"/><use href="#g65" xlink:href="#g65" x="1856" y="960"/><use href="#g65" xlink:href="#g65" x="688" y="992"/><use href="#g38" xlink:href="#g38" x="1168" y="992"/><use href="#g32" xlink:href="#g32" x="1200" y="992"/><use href="#g40" xlink:href="#g40" x="1216" y="992"/><use href="#g58" xlink:href="#g58" x="1232" y="992"/><use href="#g44" xlink:href="#g44" x="1248" y="992"/><use href="#g39" xlink:href="#g39" x="1376" y="992"/><use href="#g65" xlink:href="#g65" x="1856" y="992"/><use href="#g65" xlink:href="#g65" x="688" y="1024"/><use href="#g38" xlink:href="#g38" x="1168" y="1024"/><use href="#g19" xlink:href="#g19" x="1200" y="1024"/><use href="#g40" xlink:href="#g40" x="1216" y="1024"/><use href="#g51" xlink:href="#g51" x="1232" y="1024"/><use href="#g42" xlink:href="#g42" x="1248" y="1024"/><use href="#g44" xlink:href="#g44" x="1264" y="1024"/><use href="#g49" xlink:href="#g49" x="1280" y="1024"/><use href="#g39" xlink:href="#g39" x="1376" y="1024"/><use href="#g65" xlink:href="#g65" x="1856" y="1024"/><use href="#g65" xlink:href="#g65" x="688" y="1056"/><use href="#g65" xlink:href="#g65" x="1856" y="1056"/><use href="#g68" xlink:href="#g68" x="688" y="1088"/><use href="#g64" xlink:href="#g64" x="704" y="1088"/><use href="#g64" xlink:href="#g64" x="720" y="1088"/><use href="#g64" xlink:href="#g64" x="736" y="1088"/><use href="#g64" xlink:href="#g64" x="752" y="1088"/><use href="#g64" xlink:href="#g64" x="768" y="1088"/><use href="#g64" xlink:href="#g64" x="784" y="1088"/><use href="#g64" xlink:href="#g64" x="800" y="1088"/><use href="#g64" xlink:href="#g64" x="816" y="1088"/><use href="#g64" xlink:href="#g64" x="832" y="1088"/><use href="#g64" xlink:href="#g64" x="848" y="1088"/><use href="#g64" xlink:href="#g64" x="864" y="1088"/><use href="#g64" xlink:href="#g64" x="880" y="1088"/><use href="#g64" xlink:href="#g64" x="896" y="1088"/><use href="#g64" xlink:href="#g64" x="912" y="1088"/><use href="#g64" xlink:href="#g64" x="928" y="1088"/><use href="#g64" xlink:href="#g64" x="944" y="1088"/><use href="#g64" xlink:href="#g64" x="960" y="1088"/><use href="#g64" xlink:href="#g64" x="976" y="1088"/><use href="#g64" xlink:href="#g64" x="992" y="1088"/><use href="#g64" xlink:href="#g64" x="1008" y="1088"/><use href="#g64" xlink:href="#g64" x="1024" y="1088"/><use href="#g64" xlink:href="#g64" x="1040" y="1088"/><use href="#g64" xlink:href="#g64" x="1056" y="1088"/><use href="#g64" xlink:href="#g64" x="1072" y="1088"/><use href="#g64" xlink:href="#g64" x="1088" y="1088"/><use href="#g64" xlink:href="#g64" x="1104" y="1088"/><use href="#g64" xlink:href="#g64" x="1120" y="1088"/><use href="#g64" xlink:href="#g64" x="1136" y="1088"/><use href="#g64" xlink:href="#g64" x="1152" y="1088"/><use href="#g64" xlink:href="#g64" x="1168" y="1088"/><use href="#g64" xlink:href="#g64" x="1184" y="1088"/><use href="#g64" xlink:href="#g64" x="1200" y="1088"/><use href="#g64" xlink:href="#g64" x="1216" y="1088"/><use href="#g64" xlink:href="#g64" x="1232" y="1088"/><use href="#g64" xlink:href="#g64" x="1248" y="1088"/><use href="#g64" xlink:href="#g64" x="1264" y="1088"/><use href="#g64" xlink:href="#g64" x="1280" y="1088"/><use href="#g64" xlink:href="#g64" x="1296" y="1088"/><use href="#g64" xlink:href="#g64" x="1312" y="1088"/><use href="#g64" xlink:href="#g64" x="1328" y="1088"/><use href="#g64" xlink:href="#g64" x="1344" y="1088"/><use href="#g64" xlink:href="#g64" x="1360" y="1088"/><use href="#g64" xlink:href="#g64" x="1376" y="1088"/><use href="#g64" xlink:href="#g64" x="1392" y="1088"/><use href="#g64" xlink:href="#g64" x="1408" y="1088"/><use href="#g64" xlink:href="#g64" x="1424" y="1088"/><use href="#g64" xlink:href="#g64" x="1440" y="1088"/><use href="#g64" xlink:href="#g64" x="1456" y="1088"/><use href="#g64" xlink:href="#g64" x="1472" y="1088"/><use href="#g64" xlink:href="#g64" x="1488" y="1088"/><use href="#g64" xlink:href="#g64" x="1504" y="1088"/><use href="#g64" xlink:href="#g64" x="1520" y="1088"/><use href="#g64" xlink:href="#g64" x="1536" y="1088"/><use href="#g64" xlink:href="#g64" x="1552" y="1088"/><use href="#g64" xlink:href="#g64" x="1568" y="1088"/><use href="#g64" xlink:href="#g64" x="1584" y="1088"/><use href="#g64" xlink:href="#g64" x="1600" y="1088"/><use href="#g64" xlink:href="#g64" x="1616" y="1088"/><use href="#g64" xlink:href="#g64" x="1632" y="1088"/><use href="#g64" xlink:href="#g64" x="1648" y="1088"/><use href="#g64" xlink:href="#g64" x="1664" y="1088"/><use href="#g64" xlink:href="#g64" x="1680" y="1088"/><use href="#g64" xlink:href="#g64" x="1696" y="1088"/><use href="#g64" xlink:href="#g64" x="1712" y="1088"/><use href="#g64" xlink:href="#g64" x="1728" y="1088"/><use href="#g64" xlink:href="#g64" x="1744" y="1088"/><use href="#g64" xlink:href="#g64" x="1760" y="1088"/><use href="#g64" xlink:href="#g64" x="1776" y="1088"/><use href="#g64" xlink:href="#g64" x="1792" y="1088"/><use href="#g64" xlink:href="#g64" x="1808" y="1088"/><use href="#g64" xlink:href="#g64" x="1824" y="1088"/><use href="#g64" xlink:href="#g64" x="1840" y="1088"/><use href="#g69" xlink:href="#g69" x="1856" y="1088"/></g><g fill="#808080"><use href="#g22" xlink:href="#g22" x="272" y="96"/><use href="#g25" xlink:href="#g25" x="288" y="96"/><use href="#g26" xlink:href="#g26" x="304" y="96"/><use href="#g21" xlink:href="#g21" x="320" y="96"/><use href="#g32" xlink:href="#g32" x="352" y="96"/><use href="#g36" xlink:href="#g36" x="368" y="96"/><use href="#g32" xlink:href="#g32" x="384" y="96"/><use href="#g33" xlink:href="#g33" x="400" y="96"/><use href="#g21" xlink:href="#g21" x="416" y="96"/><use href="#g27" xlink:href="#g27" x="432" y="96"/><use href="#g32" xlink:href="#g32" x="464" y="96"/><use href="#g34" xlink:href="#g34" x="480" y="96"/><use href="#g27" xlink:href="#g27" x="496" y="96"/><use href="#g27" xlink:href="#g27" x="512" y="96"/><use href="#g17" xlink:href="#g17" x="528" y="96"/><use href="#g31" xlink:href="#g31" x="544" y="96"/><use href="#g36" xlink:href="#g36" x="560" y="96"/><use href="#g27" xlink:href="#g27" x="304" y="160"/><use href="#g29" xlink:href="#g29" x="320" y="160"/><use href="#g34" xlink:href="#g34" x="336" y="160"/><use href="#g28" xlink:href="#g28" x="352" y="160"/><use href="#g33" xlink:href="#g33" x="368" y="160"/><use href="#g30" xlink:href="#g30" x="400" y="160"/><use href="#g29" xlink:href="#g29" x="416" y="160"/><use href="#g25" xlink:href="#g25" x="432" y="160"/><use href="#g28" xlink:href="#g28" x="448" y="160"/><use href="#g33" xlink:href="#g33" x="464" y="160"/><use href="#g32" xlink:href="#g32" x="560" y="160"/><use href="#g25" xlink:href="#g25" x="576" y="160"/><use href="#g37" xlink:href="#g37" x="592" y="160"/><use href="#g21" xlink:href="#g21" x="608" y="160"/><use href="#g33" xlink:href="#g33" x="688" y="160"/><use href="#g36" xlink:href="#g36" x="704" y="160"/><use href="#g30" xlink:href="#g30" x="720" y="160"/><use href="#g21" xlink:href="#g21" x="736" y="160"/><use href="#g20" xlink:href="#g20" x="864" y="160"/><use href="#g21" xlink:href="#g21" x="880" y="160"/><use href="#g35" xlink:href="#g35" x="896" y="160"/><use href="#g25" xlink:href="#g25" x="912" y="160"/><use href="#g19" xlink:href="#g19" x="928" y="160"/><use href="#g21" xlink:href="#g21" x="944" y="160"/><use href="#g33" xlink:href="#g33" x="976" y="160"/><use href="#g36" xlink:href="#g36" x="992" y="160"/><use href="#g30" xlink:href="#g30" x="1008" y="160"/><use href="#g21" xlink:href="#g21" x="1024" y="160"/><use href="#g38" xlink:href="#g38" x="272" y="192"/><use href="#g5" xlink:href="#g5" x="304" y="192"/><use href="#g10" xlink:href="#g10" x="544" y="192"/><use href="#g14" xlink:href="#g14" x="560" y="192"/><use href="#g4" xlink:href="#g4" x="576" y="192"/><use href="#g10" xlink:href="#g10" x="592" y="192"/><use href="#g13" xlink:href="#g13" x="608" y="192"/><use href="#g8" xlink:href="#g8" x="624" y="192"/><use href="#g23" xlink:href="#g23" x="640" y="192"/><use href="#g51" xlink:href="#g51" x="688" y="192"/><use href="#g44" xlink:href="#g44" x="704" y="192"/><use href="#g59" xlink:href="#g59" x="720" y="192"/><use href="#g44" xlink:href="#g44" x="752" y="192"/><use href="#g60" xlink:href="#g60" x="768" y="192"/><use href="#g56" xlink:href="#g56" x="784" y="192"/><use href="#g10" xlink:href="#g10" x="800" y="192"/><use href="#g51" xlink:href="#g51" x="864" y="192"/><use href="#g44" xlink:href="#g44" x="880" y="192"/><use href="#g59" xlink:href="#g59" x="896" y="192"/><use href="#g26" xlink:href="#g26" x="928" y="192"/><use href="#g35" xlink:href="#g35" x="944" y="192"/><use href="#g27" xlink:href="#g27" x="960" y="192"/><use href="#g49" xlink:href="#g49" x="992" y="192"/><use href="#g52" xlink:href="#g52" x="1008" y="192"/><use href="#g46" xlink:href="#g46" x="1024" y="192"/><use href="#g47" xlink:href="#g47" x="1040" y="192"/><use href="#g42" xlink:href="#g42" x="1056" y="192"/><use href="#g40" xlink:href="#g40" x="1072" y="192"/><use href="#g49" xlink:href="#g49" x="1088" y="192"/><use href="#g58" xlink:href="#g58" x="1120" y="192"/><use href="#g52" xlink:href="#g52" x="1136" y="192"/><use href="#g49" xlink:href="#g49" x="1152" y="192"/><use href="#g57" xlink:href="#g57" x="1168" y="192"/><use href="#g50" xlink:href="#g50" x="1184" y="192"/><use href="#g44" xlink:href="#g44" x="1200" y="192"/><use href="#g62" xlink:href="#g62" x="1312" y="192"/><use href="#g39" xlink:href="#g39" x="1344" y="192"/><use href="#g38" xlink:href="#g38" x="272" y="224"/><use href="#g5" xlink:href="#g5" x="304" y="224"/><use href="#g41" xlink:href="#g41" x="320" y="224"/><use href="#g52" xlink:href="#g52" x="336" y="224"/><use href="#g52" xlink:href="#g52" x="352" y="224"/><use href="#g56" xlink:href="#g56" x="368" y="224"/><use href="#g8" xlink:href="#g8" x="560" y="224"/><use href="#g4" xlink:href="#g4" x="576" y="224"/><use href="#g6" xlink:href="#g6" x="592" y="224"/><use href="#g6" xlink:href="#g6" x="608" y="224"/><use href="#g6" xlink:href="#g6" x="624" y="224"/><use href="#g23" xlink:href="#g23" x="640" y="224"/><use href="#g51" xlink:href="#g51" x="688" y="224"/><use href="#g44" xlink:href="#g44" x="704" y="224"/><use href="#g59" xlink:href="#g59" x="720" y="224"/><use href="#g44" xlink:href="#g44" x="752" y="224"/><use href="#g60" xlink:href="#g60" x="768" y="224"/><use href="#g56" xlink:href="#g56" x="784" y="224"/><use href="#g10" xlink:href="#g10" x="800" y="224"/><use href="#g51" xlink:href="#g51" x="864" y="224"/><use href="#g44" xlink:href="#g44" x="880" y="224"/><use href="#g59" xlink:href="#g59" x="896" y="224"/><use href="#g53" xlink:href="#g53" x="928" y="224"/><use href="#g40" xlink:href="#g40" x="944" y="224"/><use href="#g54" xlink:href="#g54" x="960" y="224"/><use href="#g56" xlink:href="#g56" x="976" y="224"/><use href="#g47" xlink:href="#g47" x="992" y="224"/><use href="#g56" xlink:href="#g56" x="1008" y="224"/><use href="#g47" xlink:href="#g47" x="1024" y="224"/><use href="#g52" xlink:href="#g52" x="1040" y="224"/><use href="#g51" xlink:href="#g51" x="1056" y="224"/><use href="#g52" xlink:href="#g52" x="1088" y="224"/><use href="#g45" xlink:href="#g45" x="1104" y="224"/><use href="#g49" xlink:href="#g49" x="1136" y="224"/><use href="#g52" xlink:href="#g52" x="1152" y="224"/><use href="#g42" xlink:href="#g42" x="1168" y="224"/><use href="#g40" xlink:href="#g40" x="1184" y="224"/><use href="#g49" xlink:href="#g49" x="1200" y="224"/><use href="#g43" xlink:href="#g43" x="1232" y="224"/><use href="#g47" xlink:href="#g47" x="1248" y="224"/><use href="#g55" xlink:href="#g55" x="1264" y="224"/><use href="#g48" xlink:href="#g48" x="1280" y="224"/><use href="#g62" xlink:href="#g62" x="1312" y="224"/><use href="#g39" xlink:href="#g39" x="1344" y="224"/><use href="#g38" xlink:href="#g38" x="272" y="256"/><use href="#g5" xlink:href="#g5" x="304" y="256"/><use href="#g41" xlink:href="#g41" x="320" y="256"/><use href="#g52" xlink:href="#g52" x="336" y="256"/><use href="#g52" xlink:href="#g52" x="352" y="256"/><use href="#g56" xlink:href="#g56" x="368" y="256"/><use href="#g5" xlink:href="#g5" x="384" y="256"/><use href="#g44" xlink:href="#g44" x="400" y="256"/><use href="#g45" xlink:href="#g45" x="416" y="256"/><use href="#g47" xlink:href="#g47" x="432" y="256"/><use href="#g7" xlink:href="#g7" x="560" y="256"/><use href="#g4" xlink:href="#g4" x="576" y="256"/><use href="#g6" xlink:href="#g6" x="592" y="256"/><use href="#g10" xlink:href="#g10" x="608" y="256"/><use href="#g15" xlink:href="#g15" x="624" y="256"/><use href="#g23" xlink:href="#g23" x="640" y="256"/><use href="#g51" xlink:href="#g51" x="688" y="256"/><use href="#g44" xlink:href="#g44" x="704" y="256"/><use href="#g59" xlink:href="#g59" x="720" y="256"/><use href="#g45" xlink:href="#g45" x="752" y="256"/><use href="#g40" xlink:href="#g40" x="768" y="256"/><use href="#g56" xlink:href="#g56" x="784" y="256"/><use href="#g9" xlink:href="#g9" x="800" y="256"/><use href="#g8" xlink:href="#g8" x="816" y="256"/><use href="#g51" xlink:href="#g51" x="864" y="256"/><use href="#g44" xlink:href="#g44" x="880" y="256"/><use href="#g59" xlink:href="#g59" x="896" y="256"/><use href="#g53" xlink:href="#g53" x="928" y="256"/><use href="#g40" xlink:href="#g40" x="944" y="256"/><use href="#g54" xlink:href="#g54" x="960" y="256"/><use href="#g56" xlink:href="#g56" x="976" y="256"/><use href="#g47" xlink:href="#g47" x="992" y="256"/><use href="#g56" xlink:href="#g56" x="1008" y="256"/><use href="#g47" xlink:href="#g47" x="1024" y="256"/><use href="#g52" xlink:href="#g52" x="1040" y="256"/><use href="#g51" xlink:href="#g51" x="1056" y="256"/><use href="#g52" xlink:href="#g52" x="1088" y="256"/><use href="#g45" xlink:href="#g45" x="1104" y="256"/><use href="#g49" xlink:href="#g49" x="1136" y="256"/><use href="#g52" xlink:href="#g52" x="1152" y="256"/><use href="#g42" xlink:href="#g42" x="1168" y="256"/><use href="#g40" xlink:href="#g40" x="1184" y="256"/><use href="#g49" xlink:href="#g49" x="1200" y="256"/><use href="#g43" xlink:href="#g43" x="1232" y="256"/><use href="#g47" xlink:href="#g47" x="1248" y="256"/><use href="#g55" xlink:href="#g55" x="1264" y="256"/><use href="#g48" xlink:href="#g48" x="1280" y="256"/><use href="#g62" xlink:href="#g62" x="1312" y="256"/><use href="#g39" xlink:href="#g39" x="1344" y="256"/><use href="#g17" xlink:href="#g17" x="272" y="352"/><use href="#g35" xlink:href="#g35" x="288" y="352"/><use href="#g17" xlink:href="#g17" x="304" y="352"/><use href="#g25" xlink:href="#g25" x="320" y="352"/><use href="#g26" xlink:href="#g26" x="336" y="352"/><use href="#g17" xlink:href="#g17" x="352" y="352"/><use href="#g18" xlink:href="#g18" x="368" y="352"/><use href="#g26" xlink:href="#g26" x="384" y="352"/><use href="#g21" xlink:href="#g21" x="400" y="352"/><use href="#g20" xlink:href="#g20" x="432" y="352"/><use href="#g21" xlink:href="#g21" x="448" y="352"/><use href="#g35" xlink:href="#g35" x="464" y="352"/><use href="#g25" xlink:href="#g25" x="480" y="352"/><use href="#g19" xlink:href="#g19" x="496" y="352"/><use href="#g21" xlink:href="#g21" x="512" y="352"/><use href="#g32" xlink:href="#g32" x="528" y="352"/><use href="#g20" xlink:href="#g20" x="304" y="416"/><use href="#g21" xlink:href="#g21" x="320" y="416"/><use href="#g35" xlink:href="#g35" x="336" y="416"/><use href="#g25" xlink:href="#g25" x="352" y="416"/><use href="#g19" xlink:href="#g19" x="368" y="416"/><use href="#g21" xlink:href="#g21" x="384" y="416"/><use href="#g33" xlink:href="#g33" x="1280" y="416"/><use href="#g36" xlink:href="#g36" x="1296" y="416"/><use href="#g30" xlink:href="#g30" x="1312" y="416"/><use href="#g21" xlink:href="#g21" x="1328" y="416"/><use href="#g32" xlink:href="#g32" x="1616" y="416"/><use href="#g25" xlink:href="#g25" x="1632" y="416"/><use href="#g37" xlink:href="#g37" x="1648" y="416"/><use href="#g21" xlink:href="#g21" x="1664" y="416"/><use href="#g38" xlink:href="#g38" x="272" y="448"/><use href="#g57" xlink:href="#g57" x="304" y="448"/><use href="#g41" xlink:href="#g41" x="320" y="448"/><use href="#g57" xlink:href="#g57" x="336" y="448"/><use href="#g51" xlink:href="#g51" x="352" y="448"/><use href="#g56" xlink:href="#g56" x="368" y="448"/><use href="#g57" xlink:href="#g57" x="384" y="448"/><use href="#g3" xlink:href="#g3" x="400" y="448"/><use href="#g58" xlink:href="#g58" x="416" y="448"/><use href="#g46" xlink:href="#g46" x="432" y="448"/><use href="#g0" xlink:href="#g0" x="464" y="448"/><use href="#g51" xlink:href="#g51" x="480" y="448"/><use href="#g44" xlink:href="#g44" x="496" y="448"/><use href="#g59" xlink:href="#g59" x="512" y="448"/><use href="#g1" xlink:href="#g1" x="528" y="448"/><use href="#g26" xlink:href="#g26" x="1280" y="448"/><use href="#g35" xlink:href="#g35" x="1296" y="448"/><use href="#g27" xlink:href="#g27" x="1312" y="448"/><use href="#g58" xlink:href="#g58" x="1344" y="448"/><use href="#g52" xlink:href="#g52" x="1360" y="448"/><use href="#g49" xlink:href="#g49" x="1376" y="448"/><use href="#g57" xlink:href="#g57" x="1392" y="448"/><use href="#g50" xlink:href="#g50" x="1408" y="448"/><use href="#g44" xlink:href="#g44" x="1424" y="448"/><use href="#g46" xlink:href="#g46" x="1456" y="448"/><use href="#g54" xlink:href="#g54" x="1472" y="448"/><use href="#g52" xlink:href="#g52" x="1488" y="448"/><use href="#g57" xlink:href="#g57" x="1504" y="448"/><use href="#g53" xlink:href="#g53" x="1520" y="448"/><use href="#g15" xlink:href="#g15" x="1600" y="448"/><use href="#g12" xlink:href="#g12" x="1616" y="448"/><use href="#g4" xlink:href="#g4" x="1632" y="448"/><use href="#g15" xlink:href="#g15" x="1648" y="448"/><use href="#g10" xlink:href="#g10" x="1664" y="448"/><use href="#g11" xlink:href="#g11" x="1680" y="448"/><use href="#g23" xlink:href="#g23" x="1696" y="448"/><use href="#g62" xlink:href="#g62" x="1744" y="448"/><use href="#g39" xlink:href="#g39" x="1776" y="448"/><use href="#g45" xlink:href="#g45" x="304" y="480"/><use href="#g54" xlink:href="#g54" x="320" y="480"/><use href="#g44" xlink:href="#g44" x="336" y="480"/><use href="#g44" xlink:href="#g44" x="352" y="480"/><use href="#g55" xlink:href="#g55" x="384" y="480"/><use href="#g53" xlink:href="#g53" x="400" y="480"/><use href="#g40" xlink:href="#g40" x="416" y="480"/><use href="#g42" xlink:href="#g42" x="432" y="480"/><use href="#g44" xlink:href="#g44" x="448" y="480"/><use href="#g10" xlink:href="#g10" x="1600" y="480"/><use href="#g14" xlink:href="#g14" x="1616" y="480"/><use href="#g4" xlink:href="#g4" x="1632" y="480"/><use href="#g10" xlink:href="#g10" x="1648" y="480"/><use href="#g13" xlink:href="#g13" x="1664" y="480"/><use href="#g8" xlink:href="#g8" x="1680" y="480"/><use href="#g23" xlink:href="#g23" x="1696" y="480"/><use href="#g62" xlink:href="#g62" x="1744" y="480"/><use href="#g38" xlink:href="#g38" x="272" y="544"/><use href="#g19" xlink:href="#g19" x="304" y="544"/><use href="#g54" xlink:href="#g54" x="320" y="544"/><use href="#g44" xlink:href="#g44" x="336" y="544"/><use href="#g40" xlink:href="#g40" x="352" y="544"/><use href="#g56" xlink:href="#g56" x="368" y="544"/><use href="#g44" xlink:href="#g44" x="384" y="544"/><use href="#g55" xlink:href="#g55" x="416" y="544"/><use href="#g52" xlink:href="#g52" x="432" y="544"/><use href="#g45" xlink:href="#g45" x="448" y="544"/><use href="#g56" xlink:href="#g56" x="464" y="544"/><use href="#g59" xlink:href="#g59" x="480" y="544"/><use href="#g40" xlink:href="#g40" x="496" y="544"/><use href="#g54" xlink:href="#g54" x="512" y="544"/><use href="#g44" xlink:href="#g44" x="528" y="544"/><use href="#g31" xlink:href="#g31" x="560" y="544"/><use href="#g17" xlink:href="#g17" x="576" y="544"/><use href="#g25" xlink:href="#g25" x="592" y="544"/><use href="#g20" xlink:href="#g20" x="608" y="544"/><use href="#g38" xlink:href="#g38" x="272" y="576"/><use href="#g19" xlink:href="#g19" x="304" y="576"/><use href="#g54" xlink:href="#g54" x="320" y="576"/><use href="#g44" xlink:href="#g44" x="336" y="576"/><use href="#g40" xlink:href="#g40" x="352" y="576"/><use href="#g56" xlink:href="#g56" x="368" y="576"/><use href="#g44" xlink:href="#g44" x="384" y="576"/><use href="#g58" xlink:href="#g58" x="416" y="576"/><use href="#g52" xlink:href="#g52" x="432" y="576"/><use href="#g49" xlink:href="#g49" x="448" y="576"/><use href="#g57" xlink:href="#g57" x="464" y="576"/><use href="#g50" xlink:href="#g50" x="480" y="576"/><use href="#g44" xlink:href="#g44" x="496" y="576"/><use href="#g46" xlink:href="#g46" x="528" y="576"/><use href="#g54" xlink:href="#g54" x="544" y="576"/><use href="#g52" xlink:href="#g52" x="560" y="576"/><use href="#g57" xlink:href="#g57" x="576" y="576"/><use href="#g53" xlink:href="#g53" x="592" y="576"/><use href="#g0" xlink:href="#g0" x="624" y="576"/><use href="#g34" xlink:href="#g34" x="272" y="672"/><use href="#g32" xlink:href="#g32" x="288" y="672"/><use href="#g21" xlink:href="#g21" x="304" y="672"/><use href="#g20" xlink:href="#g20" x="320" y="672"/><use href="#g20" xlink:href="#g20" x="352" y="672"/><use href="#g21" xlink:href="#g21" x="368" y="672"/><use href="#g35" xlink:href="#g35" x="384" y="672"/><use href="#g25" xlink:href="#g25" x="400" y="672"/><use href="#g19" xlink:href="#g19" x="416" y="672"/><use href="#g21" xlink:href="#g21" x="432" y="672"/><use href="#g32" xlink:href="#g32" x="448" y="672"/><use href="#g20" xlink:href="#g20" x="304" y="736"/><use href="#g21" xlink:href="#g21" x="320" y="736"/><use href="#g35" xlink:href="#g35" x="336" y="736"/><use href="#g25" xlink:href="#g25" x="352" y="736"/><use href="#g19" xlink:href="#g19" x="368" y="736"/><use href="#g21" xlink:href="#g21" x="384" y="736"/><use href="#g38" xlink:href="#g38" x="272" y="768"/><use href="#g57" xlink:href="#g57" x="304" y="768"/><use href="#g41" xlink:href="#g41" x="320" y="768"/><use href="#g57" xlink:href="#g57" x="336" y="768"/><use href="#g51" xlink:href="#g51" x="352" y="768"/><use href="#g56" xlink:href="#g56" x="368" y="768"/><use href="#g57" xlink:href="#g57" x="384" y="768"/><use href="#g3" xlink:href="#g3" x="400" y="768"/><use href="#g58" xlink:href="#g58" x="416" y="768"/><use href="#g46" xlink:href="#g46" x="432" y="768"/><use href="#g0" xlink:href="#g0" x="464" y="768"/><use href="#g51" xlink:href="#g51" x="480" y="768"/><use href="#g44" xlink:href="#g44" x="496" y="768"/><use href="#g59" xlink:href="#g59" x="512" y="768"/><use href="#g1" xlink:href="#g1" x="528" y="768"/><use href="#g57" xlink:href="#g57" x="304" y="800"/><use href="#g41" xlink:href="#g41" x="320" y="800"/><use href="#g57" xlink:href="#g57" x="336" y="800"/><use href="#g51" xlink:href="#g51" x="352" y="800"/><use href="#g56" xlink:href="#g56" x="368" y="800"/><use href="#g57" xlink:href="#g57" x="384" y="800"/><use href="#g3" xlink:href="#g3" x="400" y="800"/><use href="#g49" xlink:href="#g49" x="416" y="800"/><use href="#g58" xlink:href="#g58" x="432" y="800"/><use href="#g51" xlink:href="#g51" x="512" y="800"/><use href="#g44" xlink:href="#g44" x="528" y="800"/><use href="#g59" xlink:href="#g59" x="544" y="800"/><use href="#g2" xlink:href="#g2" x="560" y="800"/><use href="#g56" xlink:href="#g56" x="592" y="800"/><use href="#g52" xlink:href="#g52" x="608" y="800"/><use href="#g38" xlink:href="#g38" x="272" y="864"/><use href="#g5" xlink:href="#g5" x="304" y="864"/><use href="#g43" xlink:href="#g43" x="320" y="864"/><use href="#g44" xlink:href="#g44" x="336" y="864"/><use href="#g58" xlink:href="#g58" x="352" y="864"/><use href="#g5" xlink:href="#g5" x="368" y="864"/><use href="#g58" xlink:href="#g58" x="384" y="864"/><use href="#g43" xlink:href="#g43" x="400" y="864"/><use href="#g40" xlink:href="#g40" x="416" y="864"/><use href="#g53" xlink:href="#g53" x="304" y="896"/><use href="#g40" xlink:href="#g40" x="320" y="896"/><use href="#g54" xlink:href="#g54" x="336" y="896"/><use href="#g56" xlink:href="#g56" x="352" y="896"/><use href="#g47" xlink:href="#g47" x="368" y="896"/><use href="#g56" xlink:href="#g56" x="384" y="896"/><use href="#g47" xlink:href="#g47" x="400" y="896"/><use href="#g52" xlink:href="#g52" x="416" y="896"/><use href="#g51" xlink:href="#g51" x="432" y="896"/><use href="#g7" xlink:href="#g7" x="464" y="896"/><use href="#g51" xlink:href="#g51" x="512" y="896"/><use href="#g44" xlink:href="#g44" x="528" y="896"/><use href="#g59" xlink:href="#g59" x="544" y="896"/><use href="#g2" xlink:href="#g2" x="560" y="896"/><use href="#g53" xlink:href="#g53" x="592" y="896"/><use href="#g54" xlink:href="#g54" x="608" y="896"/><use href="#g47" xlink:href="#g47" x="624" y="896"/><use href="#g53" xlink:href="#g53" x="304" y="928"/><use href="#g40" xlink:href="#g40" x="320" y="928"/><use href="#g54" xlink:href="#g54" x="336" y="928"/><use href="#g56" xlink:href="#g56" x="352" y="928"/><use href="#g47" xlink:href="#g47" x="368" y="928"/><use href="#g56" xlink:href="#g56" x="384" y="928"/><use href="#g47" xlink:href="#g47" x="400" y="928"/><use href="#g52" xlink:href="#g52" x="416" y="928"/><use href="#g51" xlink:href="#g51" x="432" y="928"/><use href="#g8" xlink:href="#g8" x="464" y="928"/><use href="#g51" xlink:href="#g51" x="512" y="928"/><use href="#g44" xlink:href="#g44" x="528" y="928"/><use href="#g59" xlink:href="#g59" x="544" y="928"/><use href="#g2" xlink:href="#g2" x="560" y="928"/><use href="#g56" xlink:href="#g56" x="592" y="928"/><use href="#g52" xlink:href="#g52" x="608" y="928"/><use href="#g53" xlink:href="#g53" x="304" y="960"/><use href="#g40" xlink:href="#g40" x="320" y="960"/><use href="#g54" xlink:href="#g54" x="336" y="960"/><use href="#g56" xlink:href="#g56" x="352" y="960"/><use href="#g47" xlink:href="#g47" x="368" y="960"/><use href="#g56" xlink:href="#g56" x="384" y="960"/><use href="#g47" xlink:href="#g47" x="400" y="960"/><use href="#g52" xlink:href="#g52" x="416" y="960"/><use href="#g51" xlink:href="#g51" x="432" y="960"/><use href="#g9" xlink:href="#g9" x="464" y="960"/><use href="#g51" xlink:href="#g51" x="512" y="960"/><use href="#g44" xlink:href="#g44" x="528" y="960"/><use href="#g59" xlink:href="#g59" x="544" y="960"/><use href="#g2" xlink:href="#g2" x="560" y="960"/><use href="#g30" xlink:href="#g30" x="592" y="960"/><use href="#g35" xlink:href="#g35" x="608" y="960"/><use href="#g38" xlink:href="#g38" x="1168" y="1472"/><use href="#g20" xlink:href="#g20" x="1200" y="1472"/><use href="#g52" xlink:href="#g52" x="1216" y="1472"/><use href="#g51" xlink:href="#g51" x="1232" y="1472"/><use href="#g44" xlink:href="#g44" x="1248" y="1472"/><use href="#g39" xlink:href="#g39" x="1376" y="1472"/><use href="#g38" xlink:href="#g38" x="1168" y="1504"/><use href="#g31" xlink:href="#g31" x="1200" y="1504"/><use href="#g44" xlink:href="#g44" x="1216" y="1504"/><use href="#g55" xlink:href="#g55" x="1232" y="1504"/><use href="#g44" xlink:href="#g44" x="1248" y="1504"/><use href="#g56" xlink:href="#g56" x="1264" y="1504"/><use href="#g39" xlink:href="#g39" x="1376" y="1504"/><use href="#g38" xlink:href="#g38" x="1168" y="1536"/><use href="#g18" xlink:href="#g18" x="1200" y="1536"/><use href="#g40" xlink:href="#g40" x="1216" y="1536"/><use href="#g42" xlink:href="#g42" x="1232" y="1536"/><use href="#g48" xlink:href="#g48" x="1248" y="1536"/><use href="#g39" xlink:href="#g39" x="1376" y="1536"/></g><g fill="#121212"><use href="#g57" xlink:href="#g57" x="1072" y="608"/><use href="#g41" xlink:href="#g41" x="1088" y="608"/><use href="#g57" xlink:href="#g57" x="1104" y="608"/><use href="#g51" xlink:href="#g51" x="1120" y="608"/><use href="#g56" xlink:href="#g56" x="1136" y="608"/><use href="#g57" xlink:href="#g57" x="1152" y="608"/><use href="#g3" xlink:href="#g3" x="1168" y="608"/><use href="#g49" xlink:href="#g49" x="1184" y="608"/><use href="#g58" xlink:href="#g58" x="1200" y="608"/></g></svg>
<div id="edge"></div>
</div>
</body></html>
